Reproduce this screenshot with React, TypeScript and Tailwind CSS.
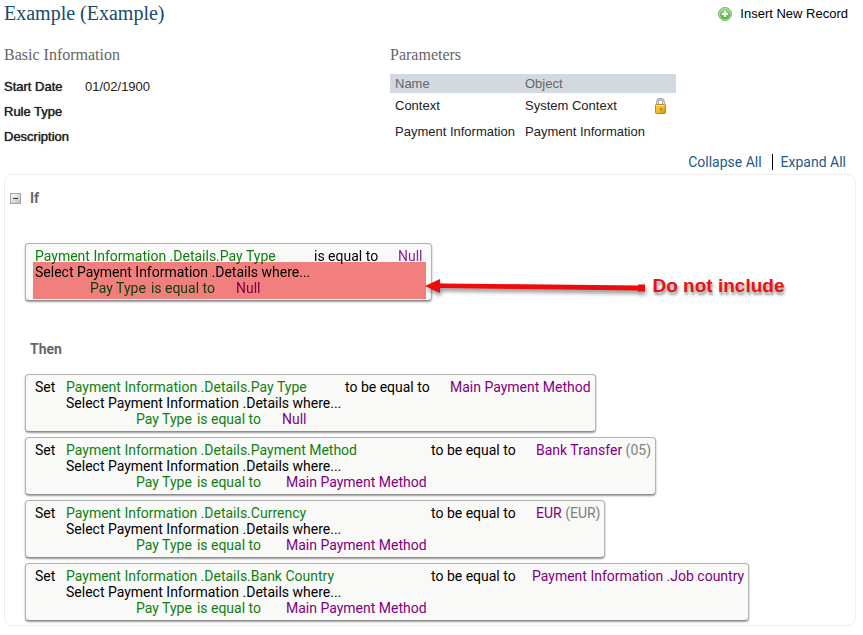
type Rule = {
  target: string;
  targetWidth: string;
  operator: string;
  operatorWidth: string;
  value: string;
  code?: string;
  filterWidth: string;
  filterValue: string;
};

const rules: Rule[] = [
  {
    target: "Payment Information .Details.Pay Type",
    targetWidth: "w-[279px]",
    operator: "to be equal to",
    operatorWidth: "w-[105px]",
    value: "Main Payment Method",
    filterWidth: "w-[146px]",
    filterValue: "Null",
  },
  {
    target: "Payment Information .Details.Payment Method",
    targetWidth: "w-[365px]",
    operator: "to be equal to",
    operatorWidth: "w-[105px]",
    value: "Bank Transfer",
    code: "(05)",
    filterWidth: "w-[150px]",
    filterValue: "Main Payment Method",
  },
  {
    target: "Payment Information .Details.Currency",
    targetWidth: "w-[365px]",
    operator: "to be equal to",
    operatorWidth: "w-[105px]",
    value: "EUR",
    code: "(EUR)",
    filterWidth: "w-[150px]",
    filterValue: "Main Payment Method",
  },
  {
    target: "Payment Information .Details.Bank Country",
    targetWidth: "w-[365px]",
    operator: "to be equal to",
    operatorWidth: "w-[101px]",
    value: "Payment Information .Job country",
    filterWidth: "w-[150px]",
    filterValue: "Main Payment Method",
  },
];

const condition: Rule = {
  target: "Payment Information .Details.Pay Type",
  targetWidth: "w-[279px]",
  operator: "is equal to",
  operatorWidth: "w-[84px]",
  value: "Null",
  filterWidth: "w-[146px]",
  filterValue: "Null",
};

const AddIcon = () => (
  <svg width="14" height="14" viewBox="0 0 14 14">
    <defs>
      <linearGradient id="add" x1="0" y1="0" x2="0" y2="1">
        <stop offset="0" stopColor="#a5d693" />
        <stop offset="1" stopColor="#4fae3c" />
      </linearGradient>
    </defs>
    <circle cx="7" cy="7" r="6.5" fill="#b5dfa8" stroke="#6dba5e" />
    <circle cx="7" cy="7" r="5.3" fill="url(#add)" />
    <path d="M7 4v6M4 7h6" stroke="#fff" strokeWidth="2" />
  </svg>
);

const LockIcon = () => (
  <svg width="11" height="16" viewBox="0 0 11 16">
    <defs>
      <linearGradient id="lock" x1="0" y1="0" x2="1" y2="1">
        <stop offset="0" stopColor="#f6cf5a" />
        <stop offset="0.5" stopColor="#f2bd2c" />
        <stop offset="1" stopColor="#d08a10" />
      </linearGradient>
    </defs>
    <path d="M2.5 7V4a3 3 0 0 1 6 0v3" fill="none" stroke="#8b8b8b" strokeWidth="2.4" />
    <path d="M2.5 7V4a3 3 0 0 1 6 0v3" fill="none" stroke="#dcdcdc" strokeWidth="1" />
    <rect x="0.5" y="6.5" width="10" height="9" rx="0.8" fill="url(#lock)" stroke="#c08a1c" />
    <path d="M1.5 7.5h8" stroke="#fbe6a0" />
    <path d="M4.5 11l2-1.500v3.500z" fill="#a9690c" />
  </svg>
);

const Toggle = () => (
  <button aria-label="Collapse" className="cursor-pointer">
    <svg width="11" height="11" viewBox="0 0 11 11">
      <defs>
        <linearGradient id="toggle" x1="0" y1="0" x2="1" y2="1">
          <stop offset="0" stopColor="#ffffff" />
          <stop offset="1" stopColor="#bcbcbc" />
        </linearGradient>
      </defs>
      <rect x="0.5" y="0.5" width="10" height="10" fill="url(#toggle)" stroke="#a4a4a4" />
      <path d="M3 5.5h5" stroke="#333" />
    </svg>
  </button>
);

const RuleCard = ({ rule, set, marked }: { rule: Rule; set?: boolean; marked?: boolean }) => (
  <div className="relative isolate flex w-fit rounded-sm border border-[#b4b4b4] border-b-[#8f8f8f] bg-[#f9f9f7] py-1 pr-1 pl-[9px] whitespace-nowrap text-black shadow-[0_1px_2px_rgba(0,0,0,0.4)]">
    {set && <div className="w-[31px] shrink-0">Set</div>}
    <div>
      <div className="flex">
        <div className={`${rule.targetWidth} shrink-0 text-[#118011]`}>{rule.target}</div>
        <div className={`${rule.operatorWidth} shrink-0`}>{rule.operator}</div>
        <div className={marked ? "pr-1 text-[#8f209a]" : "text-[#800080]"}>
          {rule.value}
          {rule.code && <span className="text-[#808080]"> {rule.code}</span>}
        </div>
      </div>
      <div>Select Payment Information .Details where...</div>
      <div className={set ? "flex pl-[70px]" : "flex pl-[55px]"}>
        <div className={`${rule.filterWidth} flex shrink-0 gap-[5px] text-[#118011]`}>
          <span>Pay Type</span>
          <span>is equal to</span>
        </div>
        <div className="text-[#800080]">{rule.filterValue}</div>
      </div>
    </div>
    {marked && (
      <div className="absolute top-[18px] right-[5px] bottom-px left-[7px] bg-[#f68282] mix-blend-multiply" />
    )}
  </div>
);

const Note = () => (
  <div className="absolute top-[31px] left-full -ml-[7px] flex items-center whitespace-nowrap">
    <svg
      width="220"
      height="24"
      viewBox="0 0 220 24"
      className="drop-shadow-[1px_3px_2px_rgba(0,0,0,0.45)]"
    >
      <path d="M0 12l15-7v4.500l198 2V10.500h7v7h-7v-1l-198-2.500V19z" fill="#ee0b0b" />
    </svg>
    <span className="pl-2 font-['Liberation_Sans',Arial,sans-serif] text-[19px] leading-6 font-bold text-[#ee1111] [text-shadow:1px_3px_3px_rgba(0,0,0,0.45)]">
      Do not include
    </span>
  </div>
);

const App = () => {
  return (
    <div className="bg-white pr-[7px] pb-2 pl-1 font-['Liberation_Sans',Arial,sans-serif] text-[13px] text-[#222]">
      <header className="flex h-[26px] items-center justify-between pr-2">
        <h1 className="font-['Liberation_Serif',serif] text-xl text-[#1a4a6b]">
          Example (Example)
        </h1>
        <button className="flex cursor-pointer items-center gap-2 pt-px text-black">
          <AddIcon />
          Insert New Record
        </button>
      </header>

      <div className="grid grid-cols-[386px_1fr] pt-[19px]">
        <section>
          <h2 className="font-['Liberation_Serif',serif] text-base leading-5 text-[#666]">
            Basic Information
          </h2>
          <dl className="grid grid-cols-[81px_1fr] pt-[9px] leading-[25px]">
            <dt className="[text-shadow:0_0_1px_#222]">Start Date</dt>
            <dd>01/02/1900</dd>
            <dt className="[text-shadow:0_0_1px_#222]">Rule Type</dt>
            <dd></dd>
            <dt className="[text-shadow:0_0_1px_#222]">Description</dt>
            <dd></dd>
          </dl>
        </section>

        <section>
          <h2 className="font-['Liberation_Serif',serif] text-base leading-5 text-[#666]">
            Parameters
          </h2>
          <table className="mt-[9px] w-[286px] table-fixed text-left">
            <thead className="bg-[#d2d9e0] leading-[19px] text-[#666]">
              <tr>
                <th className="w-[130px] pl-[5px] font-normal">Name</th>
                <th className="w-[130px] pl-[5px] font-normal">Object</th>
                <th></th>
              </tr>
            </thead>
            <tbody className="leading-[26px] whitespace-nowrap">
              <tr>
                <td className="pl-[5px]">Context</td>
                <td className="pl-[5px]">System Context</td>
                <td className="pl-[5px]">
                  <LockIcon />
                </td>
              </tr>
              <tr>
                <td className="pl-[5px]">Payment Information</td>
                <td className="pl-[5px]">Payment Information</td>
                <td></td>
              </tr>
            </tbody>
          </table>
        </section>
      </div>

      <nav className="flex justify-end pt-[5px] pr-[10px] pb-1 font-[Roboto,sans-serif] text-sm leading-4 text-[#1f5a85]">
        <a href="#collapse" className="border-r border-black pr-[10px]">
          Collapse All
        </a>
        <a href="#expand" className="pl-2">
          Expand All
        </a>
      </nav>

      <main className="rounded-lg border border-[#eee] pb-1 pl-5 font-[Roboto,sans-serif] text-sm leading-4">
        <div className="-ml-[15px] flex items-center gap-[9px] pt-[15px]">
          <Toggle />
          <h3 className="font-bold text-[#666]">If</h3>
        </div>
        <div className="relative mt-[37px] w-fit">
          <RuleCard rule={condition} marked />
          <Note />
        </div>

        <h3 className="pt-10 pl-[5px] font-bold text-[#666]">Then</h3>
        <div className="flex flex-col gap-[5px] pt-[17px]">
          {rules.map((rule) => (
            <RuleCard key={rule.target} rule={rule} set />
          ))}
        </div>
      </main>
    </div>
  );
};

export default App;
